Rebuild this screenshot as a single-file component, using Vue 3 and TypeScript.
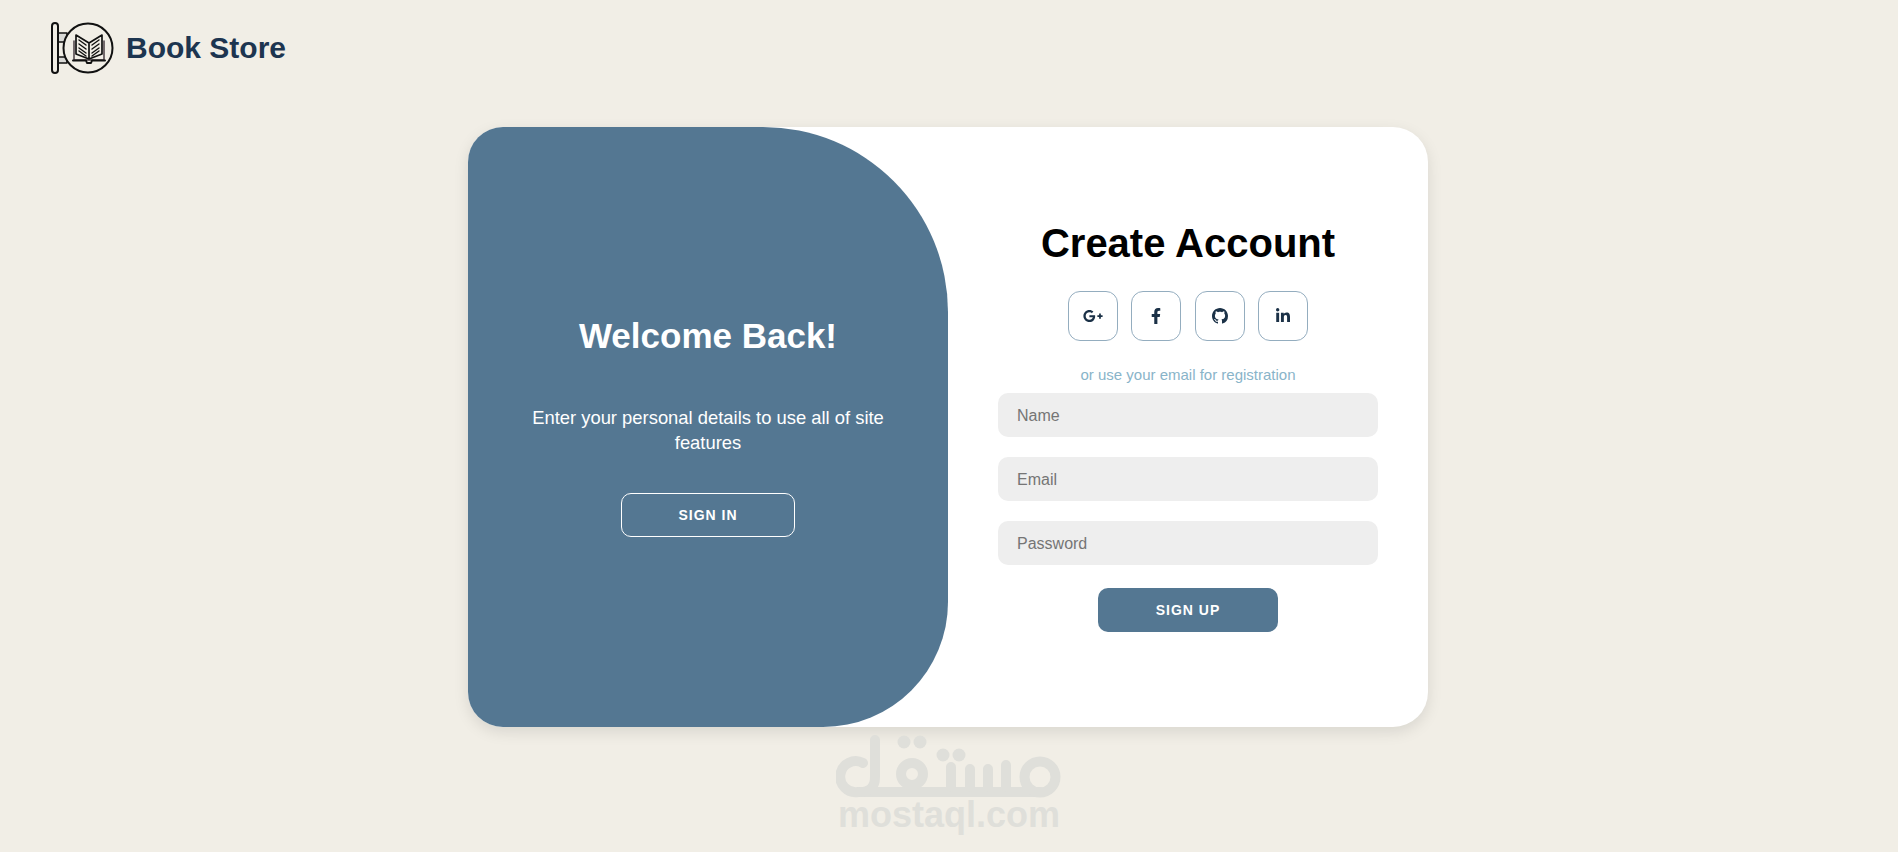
<template>
  <div class="page">
    <header class="topbar">
      <svg class="logo" width="66" height="54" viewBox="0 0 66 54" fill="none" stroke="#111" stroke-linecap="round" stroke-linejoin="round">
        <path d="M8 12H17V21H8M8 36H17V42H8" fill="#d9d9d6" stroke-width="1.4" />
        <rect x="2" y="2" width="6" height="50" rx="3" fill="#f1eee6" stroke-width="2" />
        <circle cx="38" cy="27" r="24.5" fill="#f1eee6" stroke-width="2" />
        <path d="M24 20V39H54V20" stroke="#4a3f44" stroke-width="1.5" />
        <path d="M26 14L39 22V38L26 33Z M52 14L39 22V38L52 33Z" fill="#f1eee6" stroke-width="1.7" />
        <path d="M29 19L36 24M29 23L36 28M29 27L36 32M29 30L36 35M49 19L42 24M49 23L42 28M49 27L42 32M49 30L42 35" stroke-width="1.4" />
        <path d="M23 39.5H36L37 42H41L42 39.5H55" stroke-width="2" />
      </svg>
      <span class="brand">Book Store</span>
    </header>

    <main class="card">
      <section class="panel">
        <h2>Welcome Back!</h2>
        <p>Enter your personal details to use all of site features</p>
        <button class="ghost" type="button">Sign In</button>
      </section>

      <form class="signup" @submit.prevent>
        <h1>Create Account</h1>
        <div class="socials">
          <a v-for="s in socials" :key="s.name" class="social" href="#" :aria-label="s.name">
            <svg height="16" :viewBox="s.box" :width="s.width" fill="#1b3147"><path :d="s.path" /></svg>
          </a>
        </div>
        <span class="hint">or use your email for registration</span>
        <input type="text" placeholder="Name" />
        <input type="email" placeholder="Email" />
        <input type="password" placeholder="Password" />
        <button class="solid" type="submit">Sign Up</button>
      </form>
    </main>

    <div class="watermark">
      <svg width="226" height="72" viewBox="0 0 226 72" fill="none" stroke="#dfdfda" stroke-width="10" stroke-linecap="round">
        <path d="M27 28A15.5 15.5 0 1 0 22 57H204" />
        <path d="M39 5V42Q39 57 24 57" />
        <circle cx="76" cy="39" r="11" />
        <path d="M115 32V52M134 34V52M152 34V52M170 30V52" />
        <circle cx="204" cy="42" r="15.5" />
        <g fill="#dfdfda" stroke="none">
          <circle cx="68" cy="7" r="6.5" />
          <circle cx="84" cy="7" r="6.5" />
          <circle cx="107" cy="20" r="6.5" />
          <circle cx="123" cy="20" r="6.5" />
        </g>
      </svg>
      <span>mostaql.com</span>
    </div>
  </div>
</template>

<script setup lang="ts">
interface Social {
  name: string;
  box: string;
  width: number;
  path: string;
}

const socials: Social[] = [
  {
    name: "Google",
    box: "0 0 640 512",
    width: 20,
    path: "M386.061 228.496c1.834 9.692 3.143 19.384 3.143 31.956C389.204 370.205 315.599 448 204.8 448c-106.084 0-192-85.915-192-192s85.916-192 192-192c51.864 0 95.083 18.859 128.611 50.292l-52.126 50.03c-14.145-13.621-39.028-29.599-76.485-29.599-65.484 0-118.92 54.221-118.92 121.277 0 67.056 53.436 121.277 118.92 121.277 75.961 0 104.513-54.745 108.965-82.773H204.8v-66.009h181.261zm185.406 6.437V179.2h-56.001v55.733h-55.733v56.001h55.733v55.733h56.001v-55.733H627.2v-56.001h-55.733z",
  },
  {
    name: "Facebook",
    box: "0 0 320 512",
    width: 10,
    path: "M279.14 288l14.22-92.66h-88.91v-60.13c0-25.35 12.42-50.06 52.24-50.06h40.42V6.26S260.43 0 225.36 0c-73.22 0-121.08 44.38-121.08 124.72v70.62H22.89V288h81.39v224h100.17V288z",
  },
  {
    name: "GitHub",
    box: "0 0 16 16",
    width: 16,
    path: "M8 0C3.58 0 0 3.58 0 8c0 3.54 2.29 6.53 5.47 7.59.4.07.55-.17.55-.38 0-.19-.01-.82-.01-1.49-2.01.37-2.53-.49-2.69-.94-.09-.23-.48-.94-.82-1.13-.28-.15-.68-.52-.01-.53.63-.01 1.08.58 1.23.82.72 1.21 1.87.87 2.33.66.07-.52.28-.87.51-1.07-1.78-.2-3.64-.89-3.64-3.95 0-.87.31-1.59.82-2.15-.08-.2-.36-1.02.08-2.12 0 0 .67-.21 2.2.82.64-.18 1.32-.27 2-.27.68 0 1.36.09 2 .27 1.53-1.04 2.2-.82 2.2-.82.44 1.1.16 1.92.08 2.12.51.56.82 1.27.82 2.15 0 3.07-1.87 3.75-3.65 3.95.29.25.54.73.54 1.48 0 1.07-.01 1.93-.01 2.2 0 .21.15.46.55.38A8.013 8.013 0 0016 8c0-4.42-3.58-8-8-8z",
  },
  {
    name: "LinkedIn",
    box: "0 0 448 512",
    width: 14,
    path: "M100.28 448H7.4V148.9h92.88zM53.79 108.1C24.09 108.1 0 83.5 0 53.8a53.79 53.79 0 0 1 107.58 0c0 29.7-24.1 54.3-53.79 54.3zM447.9 448h-92.68V302.4c0-34.7-.7-79.2-48.29-79.2-48.29 0-55.69 37.7-55.69 76.7V448h-92.78V148.9h89.08v40.8h1.3c12.4-23.5 42.69-48.3 87.88-48.3 94 0 111.28 61.9 111.28 142.3V448z",
  },
];
</script>

<style>
html,
body {
  margin: 0;
  background: #f1eee6;
}
</style>

<style scoped>
.page {
  position: relative;
  box-sizing: border-box;
  height: 852px;
  padding-right: 2px;
  overflow: hidden;
  background: #f1eee6;
  font-family: "Liberation Sans", Arial, sans-serif;
}
.topbar {
  display: flex;
  align-items: center;
  height: 54px;
  padding: 21px 50px 0;
}
.logo {
  flex: none;
}
.brand {
  margin-left: 10px;
  font-size: 30px;
  font-weight: 700;
  color: #1d3550;
}
.card {
  display: flex;
  width: 960px;
  height: 600px;
  margin: 52px auto 0;
  border-radius: 35px;
  background: #fff;
  box-shadow: 0 5px 15px rgba(0, 0, 0, 0.1);
}
.panel {
  display: flex;
  flex-direction: column;
  align-items: center;
  justify-content: center;
  box-sizing: border-box;
  width: 480px;
  padding: 0 50px 1px;
  border-radius: 35px 185px 125px 35px;
  background: #547792;
  color: #fff;
  text-align: center;
}
.panel h2 {
  margin: 0;
  font-size: 35px;
  line-height: 40px;
}
.panel p {
  margin: 49px 0 0;
  font-size: 18.4px;
  line-height: 25px;
}
.signup {
  display: flex;
  flex-direction: column;
  align-items: center;
  justify-content: center;
  box-sizing: border-box;
  width: 480px;
  padding: 0 50px;
}
.signup h1 {
  margin: -3px 0 0;
  font-size: 40px;
  line-height: 46px;
  color: #000;
}
.socials {
  display: flex;
  gap: 13.5px;
  margin-top: 25px;
}
.social {
  display: flex;
  align-items: center;
  justify-content: center;
  box-sizing: border-box;
  width: 50px;
  height: 50px;
  border: 1px solid #94adbf;
  border-radius: 12px;
}
.hint {
  margin-top: 25px;
  font-size: 15px;
  line-height: 17px;
  color: #89b4c9;
}
input {
  box-sizing: border-box;
  width: 100%;
  height: 44px;
  margin-top: 10px;
  padding: 2px 19px 0;
  border: 0;
  border-radius: 10px;
  outline: 0;
  background: #eee;
  font: 16px "Liberation Sans", Arial, sans-serif;
}
input + input {
  margin-top: 20px;
}
button {
  box-sizing: border-box;
  height: 44px;
  border-radius: 10px;
  color: #fff;
  font: 700 14px "Liberation Sans", Arial, sans-serif;
  letter-spacing: 1px;
  text-transform: uppercase;
}
.ghost {
  width: 174px;
  margin-top: 38px;
  border: 1px solid #fff;
  background: transparent;
}
.solid {
  width: 180px;
  margin-top: 23px;
  border: 0;
  background: #547792;
}
.watermark {
  position: absolute;
  top: 735px;
  left: 836px;
  width: 226px;
  color: #dfdfda;
  font-size: 36px;
  font-weight: 700;
  line-height: 36px;
  text-align: center;
}
.watermark svg {
  display: block;
}
.watermark span {
  position: absolute;
  top: 62px;
  left: 2px;
}
</style>
